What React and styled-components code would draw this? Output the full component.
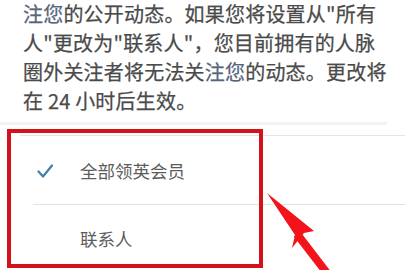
import React from "react";
import styled, { createGlobalStyle } from "styled-components";

const Global = createGlobalStyle`
  html, body {
    margin: 0;
    padding: 0;
    background: #ffffff;
    overflow: hidden;
  }
  body {
    font-family: "Noto Sans CJK SC", "Noto Sans", sans-serif;
  }
`;

const Page = styled.div`
  position: relative;
  width: 405px;
  height: 270px;
  overflow: hidden;
  background: #ffffff;
`;

const Notice = styled.div`
  padding: 0 0 0 23px;
  margin-top: -1px;
  font-size: 20px;
  line-height: 29px;
  color: #4a4a4a;
  letter-spacing: 0.2px;
  -webkit-text-stroke: 0.25px #4a4a4a;
`;

const Line = styled.div`
  white-space: nowrap;
`;

const Tint = styled.span`
  color: #55657a;
  -webkit-text-stroke: 0.25px #55657a;
`;

const FaintBand = styled.div`
  margin-top: 7px;
  width: 387px;
  height: 3px;
  background: #f1f3f7;
`;

const List = styled.div`
  margin: 10px 0 0 20px;
  border-top: 1px solid #e4e4e4;
`;

const Row = styled.div`
  display: flex;
  align-items: center;
  height: ${(p) => p.$h}px;
  padding-left: 17px;
  gap: 27px;
  font-size: 17.5px;
  color: #5c5c5c;
`;

const CheckSlot = styled.span`
  width: 16px;
  height: 16px;
  display: inline-flex;
  flex-shrink: 0;
  margin-top: 2px;
`;

const Divider = styled.div`
  margin-left: 13px;
  height: 1px;
  background: #e2e2e2;
`;

const Highlight = styled.div`
  position: absolute;
  left: 7px;
  top: 129px;
  width: 256px;
  height: 139px;
  box-sizing: border-box;
  border: 4px solid #d4121c;
  pointer-events: none;
`;

const Arrow = styled.svg`
  position: absolute;
  left: 260px;
  top: 185px;
  width: 145px;
  height: 85px;
  overflow: visible;
`;

const Check = () => (
  <svg width="16" height="16" viewBox="0 0 16 16">
    <path
      d="M1.5 8.5 L6 13.5 L15 2.5"
      fill="none"
      stroke="#3f7fae"
      strokeWidth="2.2"
      strokeLinecap="round"
      strokeLinejoin="round"
    />
  </svg>
);

export default function App() {
  return (
    <Page>
      <Global />
      <Notice>
        <Line>
          <Tint>注您</Tint>的公开动态。如果您将设置从"所有
        </Line>
        <Line>人"更改为"联系人"，您目前拥有的人脉</Line>
        <Line>
          圈外关注者将无法关<Tint>注您</Tint>的动态。更改将
        </Line>
        <Line>在 24 小时后生效。</Line>
      </Notice>
      <FaintBand />
      <List>
        <Row $h={68}>
          <CheckSlot>
            <Check />
          </CheckSlot>
          全部领英会员
        </Row>
        <Divider />
        <Row $h={67}>
          <CheckSlot />
          联系人
        </Row>
      </List>
      <Highlight />
      <Arrow viewBox="0 0 145 85">
        <polygon points="7,8 54,46 44,48 32,63 35,50" fill="#f2141a" />
        <line x1="37" y1="49" x2="70" y2="92" stroke="#f2141a" strokeWidth="8" />
      </Arrow>
    </Page>
  );
}
